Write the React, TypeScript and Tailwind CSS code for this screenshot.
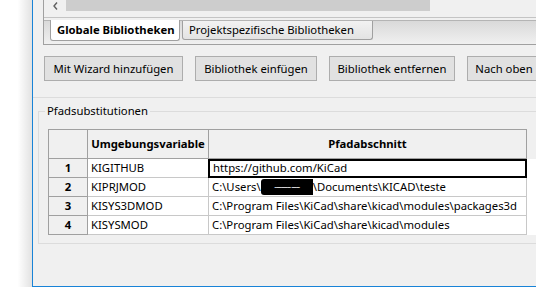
const font = "font-['Segoe_UI','Noto_Sans',sans-serif]";

const rows = [
  { n: "1", name: "KIGITHUB", path: "https://github.com/KiCad" },
  { n: "2", name: "KIPRJMOD", path: "" },
  { n: "3", name: "KISYS3DMOD", path: "C:\\Program Files\\KiCad\\share\\kicad\\modules\\packages3d" },
  { n: "4", name: "KISYSMOD", path: "C:\\Program Files\\KiCad\\share\\kicad\\modules" },
];

function Btn({ label, w }: { label: string; w: string }) {
  return (
    <div className={`${w} h-[25px] shrink-0 border border-[#adadad] bg-[#e1e1e1] flex items-center justify-center`}>
      <span className="text-[11.3px] leading-none text-black whitespace-nowrap">{label}</span>
    </div>
  );
}

function PathCell({ row }: { row: (typeof rows)[number] }) {
  if (row.n === "2") {
    return (
      <span className="whitespace-nowrap flex items-center">
        C:\Users\
        <span className="inline-flex items-center justify-center w-[52px] h-[16px] bg-black rounded-l-[3px]">
          <span className="text-white text-[8px] leading-none tracking-[-1px]">---------- -----</span>
        </span>
        \Documents\KICAD\teste
      </span>
    );
  }
  return <span className="whitespace-nowrap">{row.path}</span>;
}

export default function App() {
  return (
    <div className={`w-[536px] h-[287px] flex bg-white overflow-hidden ${font}`}>
      <div className="w-[32px] shrink-0 bg-[linear-gradient(to_right,#ffffff_55%,#e2e2e2)]" />
      <div className="flex-1 min-w-0 flex flex-col bg-[#f0f0f0] border-l border-b border-[#1883d7] overflow-hidden">
        {/* list box tail + notebook tabs */}
        <div className="ml-[10px] w-[600px] shrink-0 border-l border-b border-[#a0a0a0] flex flex-col">
          <div className="h-[18px] border-b border-[#c4c4c4] flex items-start">
            <div className="w-[22px] h-[11px] flex items-center justify-center">
              <svg width="5" height="8" viewBox="0 0 5 8">
                <path d="M4 0.5 L1 4 L4 7.5" stroke="#606060" strokeWidth="1.4" fill="none" />
              </svg>
            </div>
            <div className="w-[364px] h-[11px] bg-[#cdcdcd]" />
          </div>
          <div className="h-[26px] pt-[2px]">
            <div className="h-[24px] border-t border-[#b4b4b4] bg-[linear-gradient(to_bottom,#d9d9d9,#f0f0f0)] flex items-start pl-[6px] gap-[2px]">
              <div className="-mt-[1px] w-[130px] h-[21px] bg-white border border-t-0 border-[#a0a0a0] rounded-b-[3px] flex items-center pl-[6px]">
                <span className="text-[11.3px] font-bold text-black whitespace-nowrap">Globale Bibliotheken</span>
              </div>
              <div className="w-[191px] h-[19px] bg-[linear-gradient(to_bottom,#f2f2f2,#e3e3e3)] border border-t-0 border-[#a0a0a0] rounded-b-[3px] flex items-center pl-[6px]">
                <span className="text-[11.3px] text-black whitespace-nowrap">Projektspezifische Bibliotheken</span>
              </div>
            </div>
          </div>
        </div>

        {/* buttons */}
        <div className="mt-[11px] ml-[11px] flex gap-[12px]">
          <Btn label="Mit Wizard hinzufügen" w="w-[139px]" />
          <Btn label="Bibliothek einfügen" w="w-[122px]" />
          <Btn label="Bibliothek entfernen" w="w-[126px]" />
          <Btn label="Nach oben" w="w-[74px]" />
        </div>

        <div className="mt-[16px] h-px bg-[#dcdcdc] shrink-0" />

        {/* group box */}
        <fieldset className="mt-[5px] ml-[5px] w-[600px] border border-[#dcdcdc] pb-[8px]">
          <legend className="ml-[6px] px-[2px] text-[11.3px] leading-[16px] text-black">Pfadsubstitutionen</legend>
          <div className="mt-[10px] ml-[9px] flex flex-col">
            <div className="flex h-[30px] bg-[#f0f0f0]">
              <div className="w-[40px] h-full border border-[#a0a0a0] bg-[#f0f0f0]" />
              <div className="w-[121px] h-full border-y border-r border-[#a0a0a0] flex items-center justify-center">
                <span className="text-[11.3px] font-bold text-black">Umgebungsvariable</span>
              </div>
              <div className="w-[318px] h-full border-y border-r border-[#a0a0a0] flex items-center justify-center">
                <span className="text-[11.3px] font-bold text-black">Pfadabschnitt</span>
              </div>
            </div>
            {rows.map((r) => (
              <div key={r.n} className="flex h-[19px] bg-white">
                <div className="w-[40px] h-full border-x border-b border-[#a0a0a0] bg-[#f0f0f0] flex items-center justify-center">
                  <span className="text-[11.3px] font-bold text-black">{r.n}</span>
                </div>
                <div className="w-[121px] h-full border-b border-r border-[#c8c8c8] flex items-center pl-[3px]">
                  <span className="text-[11.3px] text-black">{r.name}</span>
                </div>
                <div
                  className={`h-full flex items-center pl-[3px] text-[11.3px] text-black ${
                    r.n === "1" ? "border-2 border-black -ml-px w-[319px]" : "w-[318px] border-b border-r border-[#c8c8c8]"
                  }`}
                >
                  <PathCell row={r} />
                </div>
              </div>
            ))}
          </div>
        </fieldset>
      </div>
    </div>
  );
}
